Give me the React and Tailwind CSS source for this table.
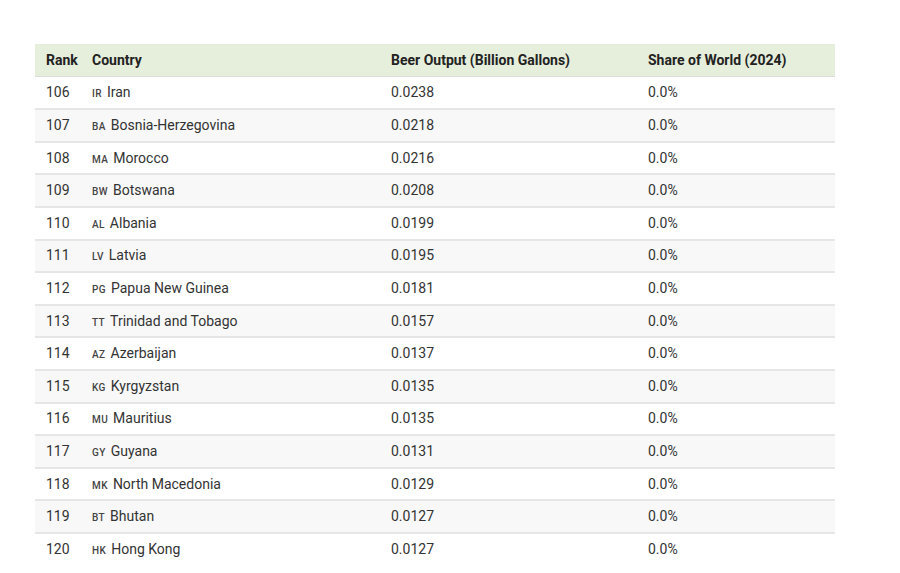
import React from 'react';

const rows = [
    [106, 'IR', 'Iran', '0.0238'],
    [107, 'BA', 'Bosnia-Herzegovina', '0.0218'],
    [108, 'MA', 'Morocco', '0.0216'],
    [109, 'BW', 'Botswana', '0.0208'],
    [110, 'AL', 'Albania', '0.0199'],
    [111, 'LV', 'Latvia', '0.0195'],
    [112, 'PG', 'Papua New Guinea', '0.0181'],
    [113, 'TT', 'Trinidad and Tobago', '0.0157'],
    [114, 'AZ', 'Azerbaijan', '0.0137'],
    [115, 'KG', 'Kyrgyzstan', '0.0135'],
    [116, 'MU', 'Mauritius', '0.0135'],
    [117, 'GY', 'Guyana', '0.0131'],
    [118, 'MK', 'North Macedonia', '0.0129'],
    [119, 'BT', 'Bhutan', '0.0127'],
    [120, 'HK', 'Hong Kong', '0.0127'],
];

const App = () => {
    return (
        <div className="w-[900px] h-[573px] overflow-hidden bg-white pt-[44px] pl-[35px] font-['Roboto',sans-serif] text-[14px] text-[#333]">
            <table className="w-[800px] border-collapse table-fixed">
                <colgroup>
                    <col className="w-[46px]" />
                    <col className="w-[299px]" />
                    <col className="w-[257px]" />
                    <col className="w-[198px]" />
                </colgroup>
                <thead>
                    <tr className="bg-[#e6eedc] h-[32.6px] border-b border-[#dcdcdc]">
                        <th className="text-left font-bold pl-[11px] text-[#222]">Rank</th>
                        <th className="text-left font-bold pl-[11px] text-[#222]">Country</th>
                        <th className="text-left font-bold pl-[11px] text-[#222]">Beer Output (Billion Gallons)</th>
                        <th className="text-left font-bold pl-[11px] text-[#222]">Share of World (2024)</th>
                    </tr>
                </thead>
                <tbody>
                    {rows.map(([rank, code, name, output], i) => (
                        <tr key={rank} className={`h-[32.6px] ${i < rows.length - 1 ? 'border-b-2 border-[#e6e6e6]' : ''} ${i % 2 === 1 ? 'bg-[#f8f8f8]' : 'bg-white'}`}>
                            <td className="pl-[11px]">{rank}</td>
                            <td className="pl-[11px]">
                                <span className="text-[10px] font-medium text-[#444] mr-[5px] tracking-[0.4px]">{code}</span>
                                {name}
                            </td>
                            <td className="pl-[11px]">{output}</td>
                            <td className="pl-[11px]">0.0%</td>
                        </tr>
                    ))}
                </tbody>
            </table>
        </div>
    );
};

export default App;
